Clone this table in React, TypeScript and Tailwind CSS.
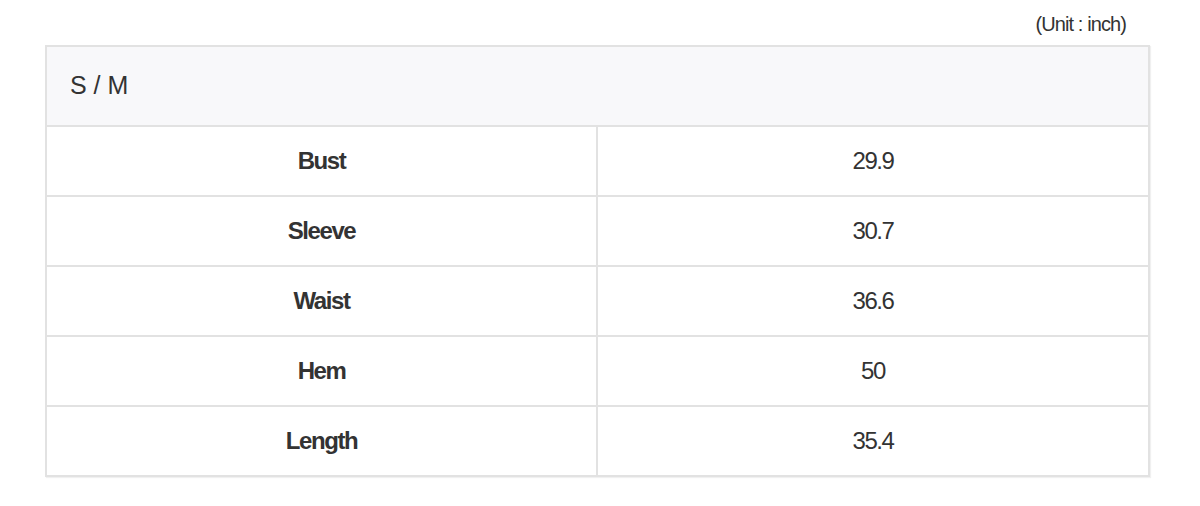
import React from 'react';

const rows = [
  { label: 'Bust', value: '29.9' },
  { label: 'Sleeve', value: '30.7' },
  { label: 'Waist', value: '36.6' },
  { label: 'Hem', value: '50' },
  { label: 'Length', value: '35.4' },
];

const App = () => {
  return (
    <div className="w-[1200px] h-[506px] bg-white pl-[45px] pr-[50px] pt-[10px]" style={{ fontFamily: '"Liberation Sans", Arial, sans-serif' }}>
      <div className="flex justify-end pr-[24px] h-[35px]">
        <span className="text-[20px] leading-[28px] text-[#333] tracking-[-0.045em]">(Unit : inch)</span>
      </div>
      <div className="border-2 border-[#e2e2e2] shadow-[1px_1px_1px_rgba(0,0,0,0.06)]">
        <div className="h-[78px] bg-[#f8f8fa] flex items-center pl-[23px] text-[25px] text-[#333]">
          S / M
        </div>
        {rows.map((row) => (
          <div key={row.label} className="grid grid-cols-[551px_1fr] h-[70px] border-t-2 border-[#e2e2e2]">
            <div className="flex items-center justify-center border-r-2 border-[#e2e2e2] text-[24px] font-bold text-[#333] tracking-[-0.06em]">
              {row.label}
            </div>
            <div className="flex items-center justify-center text-[24px] text-[#333] tracking-[-0.06em]">
              {row.value}
            </div>
          </div>
        ))}
      </div>
    </div>
  );
};

export default App;
